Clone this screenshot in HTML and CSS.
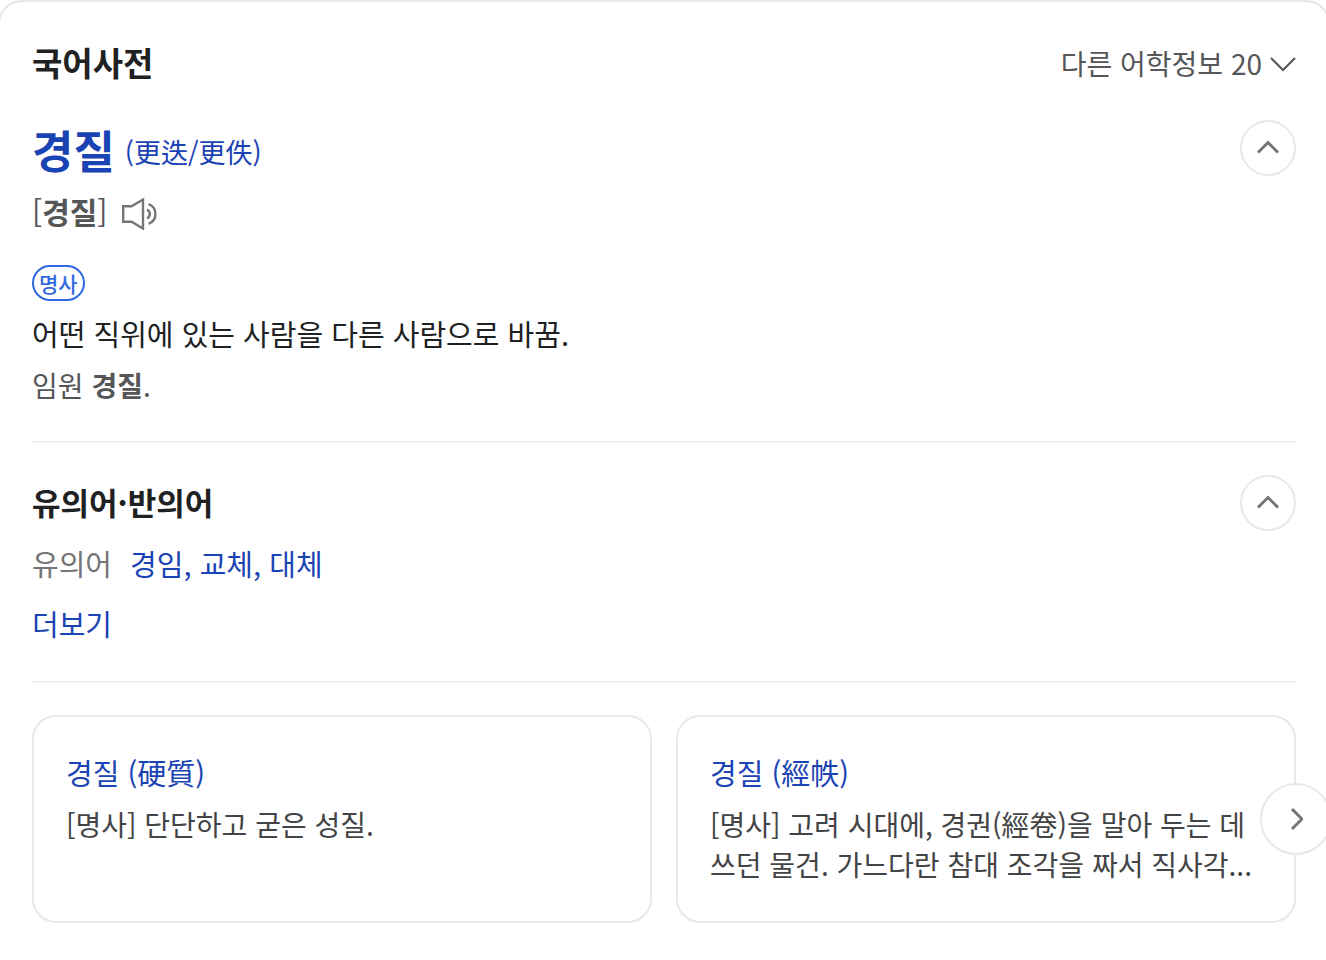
FILE: index.html
```html
<!DOCTYPE html>
<html lang="ko">
<head>
    <meta charset="UTF-8">
    <meta name="viewport" content="width=device-width, initial-scale=1.0">
    <title>국어사전 - 경질</title>
    <link rel="stylesheet" href="styles.css">
</head>
<body>
    <main class="dictionary">
        <header class="dict-header">
            <h1>국어사전</h1>
            <button type="button" class="other-info">
                다른 어학정보 20
                <svg width="26" height="20" viewBox="0 0 26 20" aria-hidden="true">
                    <path d="M1 5l12 12L25 5" fill="none" stroke="currentColor" stroke-width="2"/>
                </svg>
            </button>
        </header>

        <!-- 표제어 -->
        <section class="entry">
            <div class="row">
                <h2><a href="#" class="word">경질 <span class="hanja">(更迭/更佚)</span></a></h2>
                <button type="button" class="fold" aria-label="접기">
                    <svg width="24" height="16" viewBox="0 0 24 16" aria-hidden="true">
                        <path d="M2 12.5l10-10 10 10" fill="none" stroke="currentColor" stroke-width="3"/>
                    </svg>
                </button>
            </div>
            <div class="pronunciation">
                <span>[<b>경질</b>]</span>
                <button type="button" class="listen" aria-label="발음 듣기">
                    <svg width="38" height="34" viewBox="0 0 38 34" aria-hidden="true">
                        <g fill="none" stroke="currentColor" stroke-width="2.4">
                            <path d="M2.2 10.2h8.3L22 3.5v29l-11.5-6.7H2.2z"/>
                            <path d="M26 13.5a5 5 0 0 1 0 9"/>
                            <path d="M27.5 8.2a10.4 10.4 0 0 1 0 19.6"/>
                        </g>
                    </svg>
                </button>
            </div>
            <span class="badge">명사</span>
            <p class="meaning">어떤 직위에 있는 사람을 다른 사람으로 바꿈.</p>
            <p class="example">임원 <b>경질</b>.</p>
        </section>

        <!-- 유의어·반의어 -->
        <section class="synonyms">
            <div class="row">
                <h3>유의어·반의어</h3>
                <button type="button" class="fold" aria-label="접기">
                    <svg width="24" height="16" viewBox="0 0 24 16" aria-hidden="true">
                        <path d="M2 12.5l10-10 10 10" fill="none" stroke="currentColor" stroke-width="3"/>
                    </svg>
                </button>
            </div>
            <dl>
                <dt>유의어</dt>
                <dd><a href="#">경임,</a> <a href="#">교체,</a> <a href="#">대체</a></dd>
            </dl>
            <a href="#" class="more">더보기</a>
        </section>

        <!-- 동음이의어 카드 -->
        <section class="cards">
            <article class="card">
                <h4><a href="#">경질 (硬質)</a></h4>
                <p>[명사] 단단하고 굳은 성질.</p>
            </article>
            <article class="card">
                <h4><a href="#">경질 (經帙)</a></h4>
                <p>[명사] 고려 시대에, 경권(經卷)을 말아 두는 데 쓰던 물건. 가느다란 참대 조각을 짜서 직사각...</p>
            </article>
            <button type="button" class="next" aria-label="다음">
                <svg width="14" height="24" viewBox="0 0 14 24" aria-hidden="true">
                    <path d="M3 2l10 10L3 22" fill="none" stroke="currentColor" stroke-width="3"/>
                </svg>
            </button>
        </section>
    </main>
</body>
</html>
```
FILE: styles.css
```css
* {
    box-sizing: border-box;
}

body {
    margin: 0;
    overflow-x: hidden;
    background: #fff;
    color: #202122;
    font-family: "Noto Sans CJK KR", sans-serif;
    font-size: 29px;
    line-height: 40px;
}

h1, h2, h3, h4, p, dl, dd {
    margin: 0;
}

a {
    color: #1a43b4;
    font-weight: 400;
    text-decoration: none;
}

button {
    padding: 0;
    border: none;
    background: none;
    color: #747576;
    font: inherit;
    cursor: pointer;
}

svg {
    display: block;
}

/* 좌우 테두리는 화면 밖으로 나간다 */
.dictionary {
    min-height: 100vh;
    margin: 0 -4px 0 -2px;
    padding: 28px 32px 32px;
    border: 2px solid #e8e8e8;
    border-bottom: none;
    border-radius: 24px 24px 0 0;
}

.dict-header,
.row {
    display: flex;
    align-items: center;
    justify-content: space-between;
}

.dict-header {
    height: 66px;
}

h1 {
    padding-bottom: 2px;
    font-size: 33px;
    font-weight: 700;
}

.other-info {
    display: flex;
    align-items: center;
    gap: 8px;
    color: #555657;
    font-size: 28px;
}

.entry {
    padding: 24px 0 36px;
    border-bottom: 2px solid #efefef;
}

.row {
    height: 56px;
}

.word {
    display: flex;
    align-items: center;
    gap: 10px;
    padding-top: 4px;
    font-size: 45px;
    font-weight: 700;
}

.hanja {
    padding-top: 4px;
    font-size: 27px;
    font-weight: 400;
}

.fold {
    display: flex;
    align-items: center;
    justify-content: center;
    width: 56px;
    height: 56px;
    border: 2px solid #e8e8e8;
    border-radius: 50%;
}

.pronunciation {
    display: flex;
    align-items: center;
    gap: 14px;
    height: 42px;
    margin: 16px 0 31px;
    color: #555657;
    font-size: 30px;
}

.pronunciation span {
    padding-bottom: 4px;
}

.badge {
    display: block;
    width: fit-content;
    padding: 0 5px;
    border: 2px solid #3069df;
    border-radius: 18px;
    color: #3069df;
    font-size: 21px;
    font-weight: 500;
    line-height: 32px;
}

.meaning {
    margin: 12px 0;
}

.example {
    color: #555657;
    font-size: 28px;
}

.synonyms {
    padding: 32px 0 36px;
    border-bottom: 2px solid #efefef;
}

h3 {
    padding-bottom: 2px;
    font-size: 31px;
    font-weight: 700;
}

dl {
    display: flex;
    gap: 18px;
    margin: 12px 0 20px;
}

dt {
    color: #747576;
}

.more {
    display: block;
    width: fit-content;
    margin-bottom: 38px;
}

.synonyms {
    padding-bottom: 0;
}

.cards {
    position: relative;
    display: grid;
    grid-template-columns: 1fr 1fr;
    gap: 24px;
    margin-top: 32px;
}

.card {
    min-height: 208px;
    padding: 35px 32px;
    border: 2px solid #e8e8e8;
    border-radius: 24px;
}

.card h4 {
    margin-bottom: 12px;
    font-size: 29px;
}

.card p {
    color: #434445;
    font-size: 28px;
}

/* 카드 위에 겹치는 다음 버튼 */
.next {
    position: absolute;
    top: 50%;
    right: -36px;
    display: flex;
    align-items: center;
    justify-content: center;
    width: 72px;
    height: 72px;
    border: 2px solid #e8e8e8;
    border-radius: 50%;
    background: #fff;
    transform: translateY(-50%);
}
```
